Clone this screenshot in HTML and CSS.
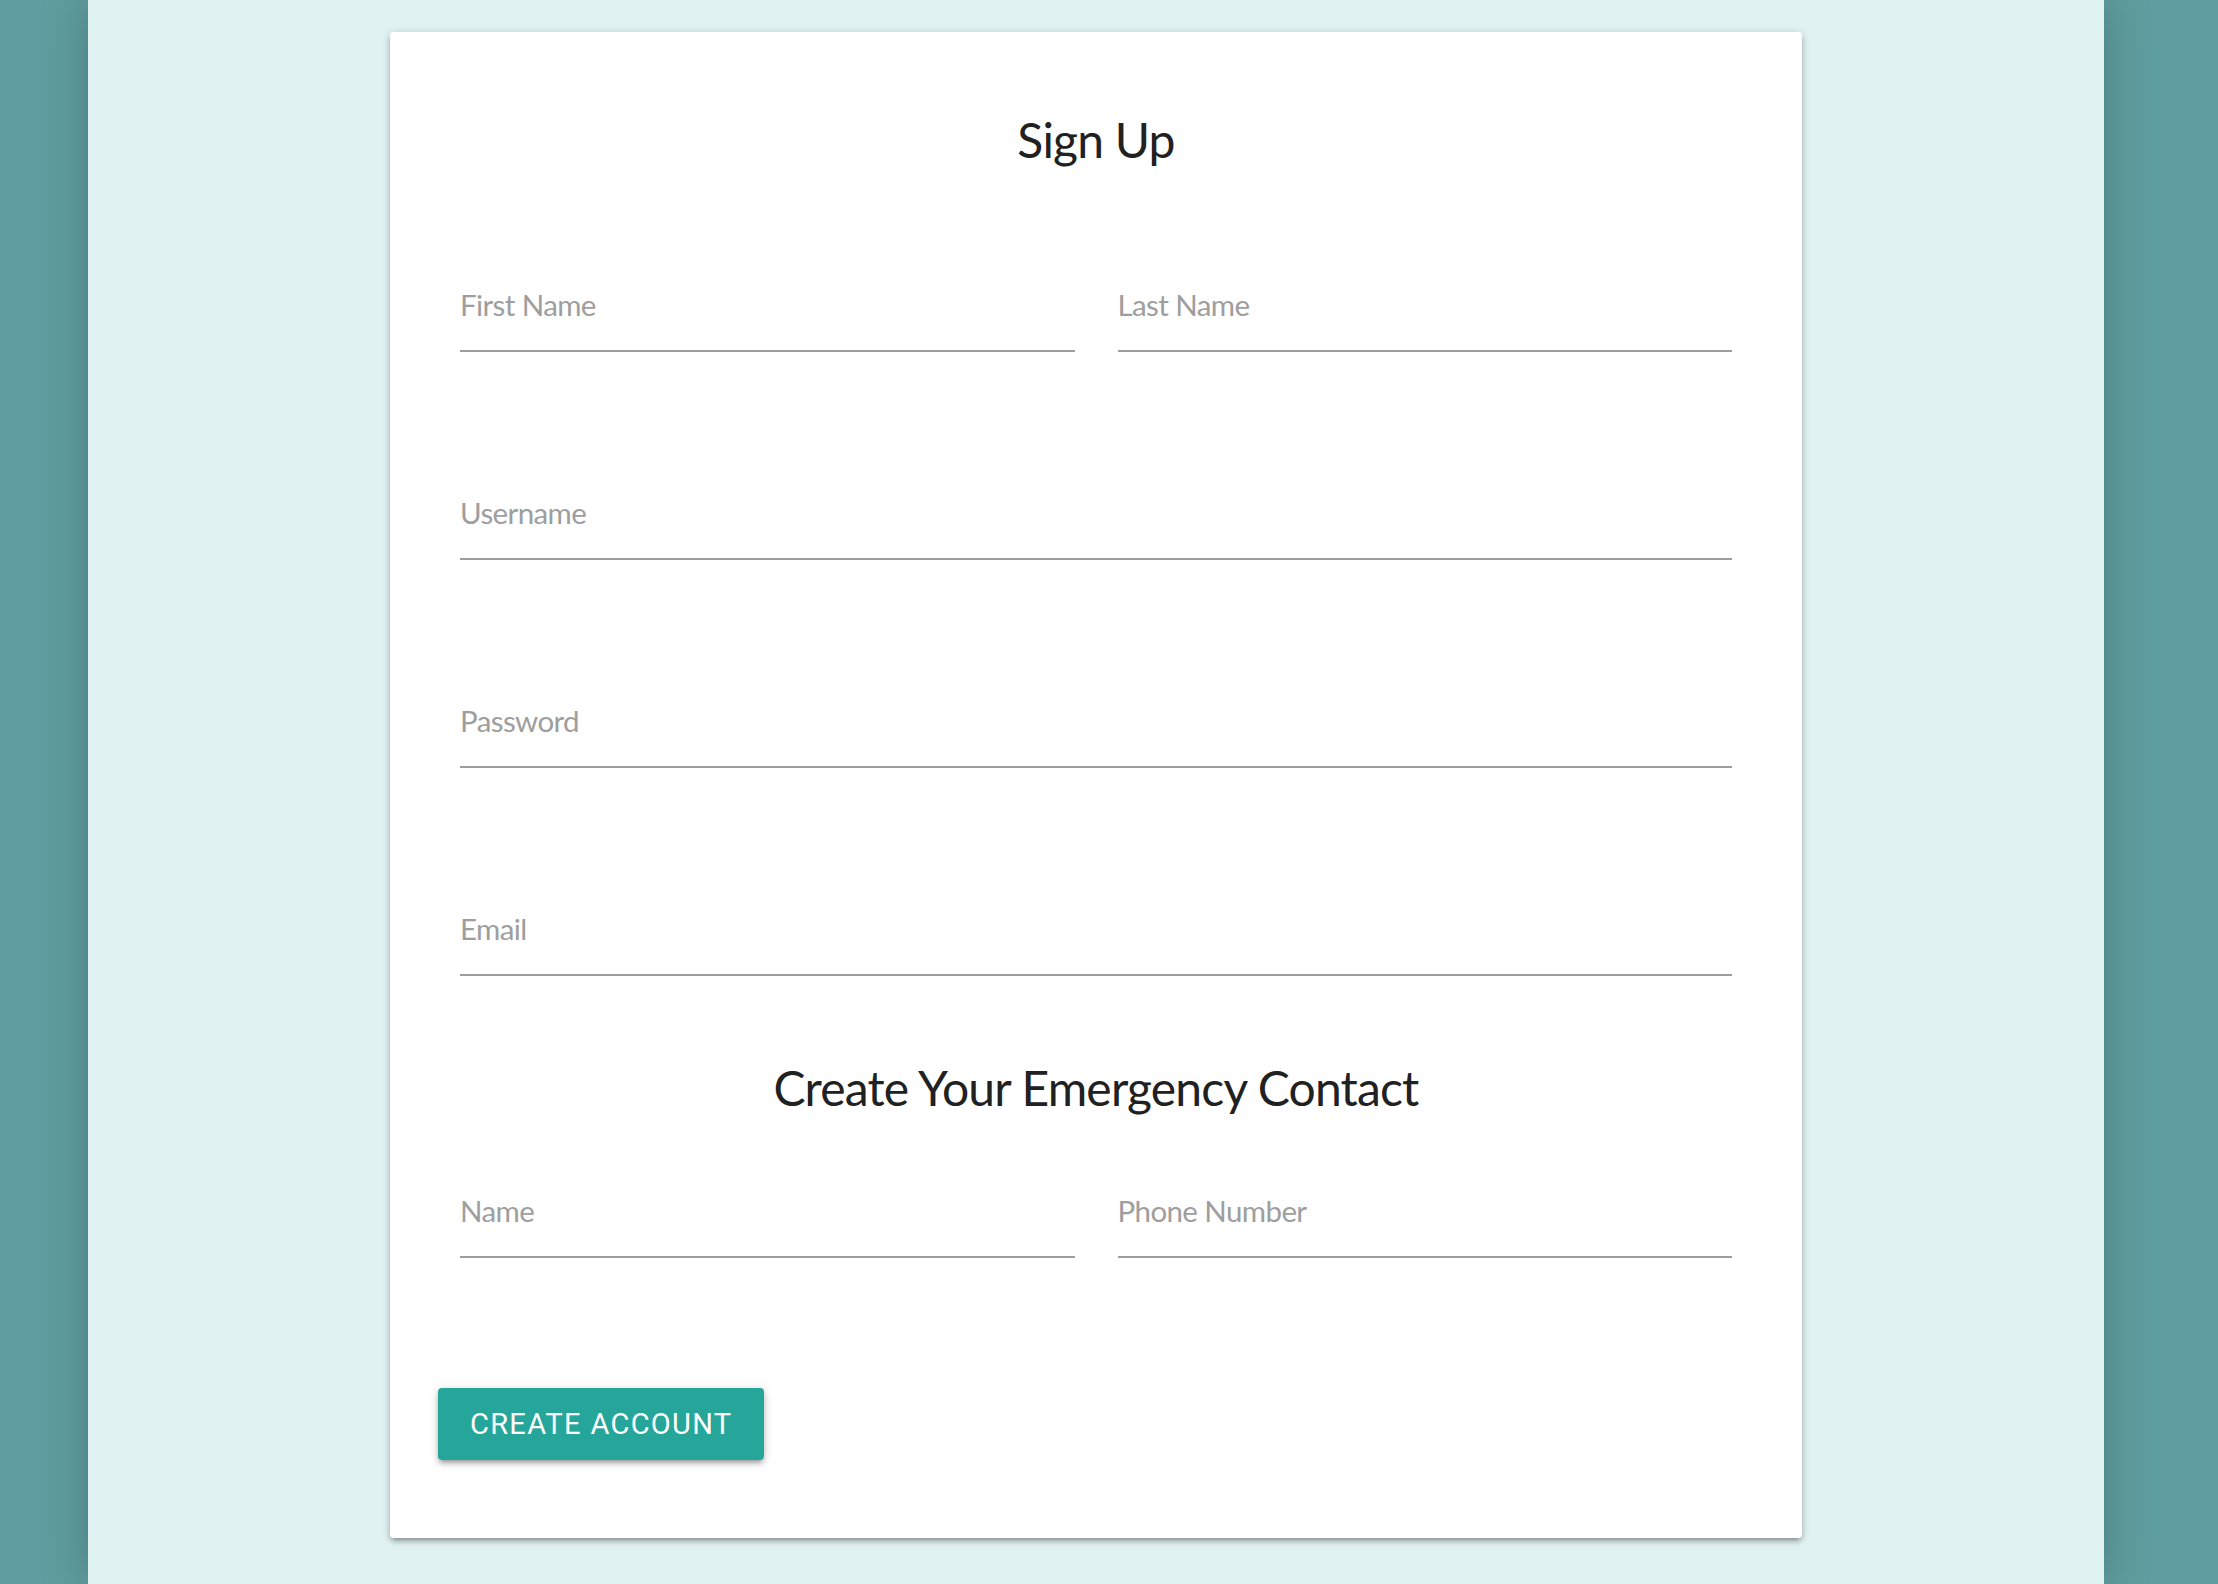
FILE: index.html
```html
<!DOCTYPE html>
<html lang="en">
<head>
<meta charset="utf-8">
<title>Sign Up</title>
<link rel="stylesheet" href="styles.css">
</head>
<body>
<div class="page">
  <main class="content">
    <form class="card">
      <h1 class="title">Sign Up</h1>
      <div class="fields">
        <div class="pair">
          <label class="field"><span class="label">First Name</span></label>
          <label class="field"><span class="label">Last Name</span></label>
        </div>
        <label class="field"><span class="label">Username</span></label>
        <label class="field"><span class="label">Password</span></label>
        <label class="field"><span class="label">Email</span></label>
      </div>
      <h2 class="title title-sub">Create Your Emergency Contact</h2>
      <div class="fields fields-sub">
        <div class="pair">
          <label class="field"><span class="label">Name</span></label>
          <label class="field"><span class="label">Phone Number</span></label>
        </div>
      </div>
      <div class="actions">
        <button type="button" class="btn">Create Account</button>
      </div>
    </form>
  </main>
</div>
</body>
</html>
```
FILE: styles.css
```css
html, body {
  margin: 0;
  padding: 0;
}
body {
  background: #5f9ea0;
  min-height: 100vh;
  font-family: Lato, "Open Sans", sans-serif;
}
.page {
  display: flex;
  min-height: 100vh;
}
.content {
  margin-left: 88px;
  width: 2016px;
  min-height: 1584px;
  background: #e0f2f1;
  box-shadow: 0 0 46px rgba(0, 0, 0, 0.22);
  display: flex;
  justify-content: center;
  align-items: flex-start;
  padding-top: 32px;
  box-sizing: border-box;
}
.card {
  width: 1412px;
  height: 1506px;
  box-sizing: border-box;
  background: #fff;
  border-radius: 4px;
  padding: 79px 48px 78px;
  box-shadow: 0 4px 4px 0 rgba(0,0,0,0.14), 0 6px 2px -4px rgba(0,0,0,0.12), 0 2px 10px 0 rgba(0,0,0,0.2);
  display: flex;
  flex-direction: column;
}
.title {
  margin: 0;
  font-family: Lato, sans-serif;
  font-weight: 400;
  font-size: 48px;
  line-height: 58px;
  color: #212121;
  text-align: center;
  letter-spacing: -0.8px;
}
.fields {
  padding: 0 22px;
  display: flex;
  flex-direction: column;
  gap: 143px;
  margin-top: 118px;
}
.fields-sub {
  margin-top: 76px;
}
.title-sub {
  margin-top: 83px;
}
.pair {
  display: grid;
  grid-template-columns: 1fr 1fr;
  column-gap: 43px;
}
.field {
  display: block;
  padding-bottom: 27px;
  border-bottom: 2px solid #9e9e9e;
}
.label {
  display: block;
  font-family: Lato, sans-serif;
  font-size: 29.5px;
  line-height: 36px;
  color: #9e9e9e;
  letter-spacing: -0.6px;
}
.actions {
  margin-top: 130px;
}
.btn {
  height: 72px;
  padding: 0 32px;
  border: none;
  border-radius: 4px;
  background: #26a69a;
  color: #fff;
  font-family: Roboto, sans-serif;
  font-size: 29px;
  letter-spacing: 1.3px;
  text-transform: uppercase;
  box-shadow: 0 4px 4px 0 rgba(0,0,0,0.14), 0 6px 2px -4px rgba(0,0,0,0.12), 0 2px 10px 0 rgba(0,0,0,0.2);
}
```
